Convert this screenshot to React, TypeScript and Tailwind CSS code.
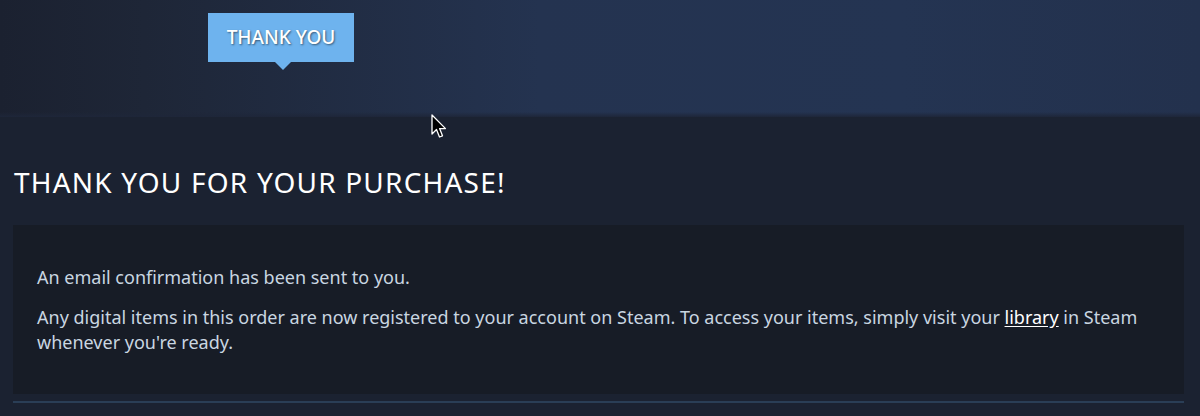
export default function App() {
  return (
    <div className="relative w-[1200px] h-[416px] overflow-hidden bg-[#1b2231] font-['Noto_Sans',sans-serif]">
      {/* top banner */}
      <div className="relative h-[117px] bg-[linear-gradient(90deg,#1b2130_0%,#1e2637_12%,#243350_45%,#243452_75%,#23314d_100%)]">
        <div className="absolute inset-x-0 bottom-0 h-[5px] bg-gradient-to-b from-transparent to-[#1e2639]" />
        <div className="relative ml-[208px] pt-[13px] w-[146px]">
          <div className="h-[49px] bg-[#6eb3ee] flex items-center justify-center text-white text-[19px] font-medium [text-shadow:1px_1px_2px_rgba(0,0,0,0.5)]">
            THANK YOU
          </div>
          <div className="absolute left-[67px] top-[62px] w-0 h-0 border-l-[8px] border-r-[8px] border-t-[8px] border-l-transparent border-r-transparent border-t-[#6eb3ee]" />
        </div>
      </div>

      {/* cursor */}
      <svg className="absolute left-[431px] top-[114px]" width="16" height="26" viewBox="0 0 16 26">
        <path d="M1 1 L1 20 L5.5 15.5 L8.5 23 L11.5 21.8 L8.6 14.6 L14.5 14.6 Z" fill="#000" stroke="#fff" strokeWidth="1.3" strokeLinejoin="round" />
      </svg>

      <div className="px-[13px] pr-[16px]">
        <h1 className="mt-[47px] ml-[1px] text-white text-[28px] leading-[36px] tracking-[1.2px]">
          THANK YOU FOR YOUR PURCHASE!
        </h1>
        <div className="mt-[25px] h-[169px] bg-[#171c26] px-[24px] pt-[40px] text-[18px] leading-[25px] text-[#c9d6e1]">
          <p>An email confirmation has been sent to you.</p>
          <p className="mt-[15px]">
            Any digital items in this order are now registered to your account on Steam. To access your items, simply visit your{" "}
            <a className="text-white underline underline-offset-2">library</a> in Steam whenever you're ready.
          </p>
        </div>
        <div className="mt-[7px] h-[2px] bg-[#2a3e56]" />
      </div>
    </div>
  );
}
